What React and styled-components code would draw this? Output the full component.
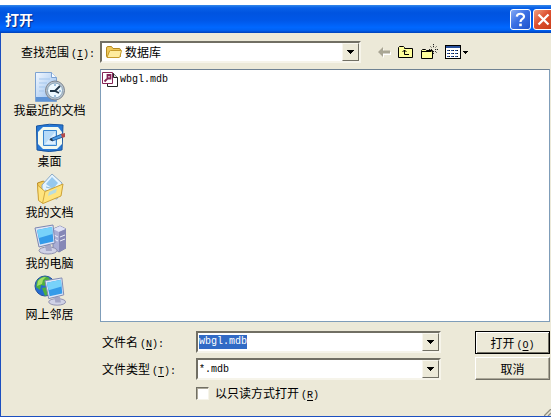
import { useEffect, useRef } from "react";
import styled, { createGlobalStyle } from "styled-components";

export default function App() {
    const nameInput = useRef(null);

    useEffect(() => {
        nameInput.current.focus();
        nameInput.current.select();
    }, []);

    return (
        <>
        <GlobalStyle/>
        <Dialog>
            <TitleBar>
                <Title>打开</Title>
                <TitleButtons>
                    <TitleButton type="button" aria-label="帮助">
                        <svg width="19" height="19" viewBox="0 0 19 19" fill="none" stroke="#fff">
                            <path d="M5.8 6.6C6 2.8 13.2 2.8 13 6.7C12.9 9 9.5 9 9.5 12" strokeWidth="2.2"/>
                            <path d="M9.5 13.6v2.6" strokeWidth="2.6"/>
                        </svg>
                    </TitleButton>
                    <TitleButton type="button" aria-label="关闭" $close>
                        <svg width="19" height="19" viewBox="0 0 19 19" stroke="#fff" strokeWidth="2.3">
                            <path d="M4.5 4.5l10 10M14.5 4.5l-10 10"/>
                        </svg>
                    </TitleButton>
                </TitleButtons>
            </TitleBar>
            <Body>
                <LookRow>
                    <LookLabel htmlFor="look">查找范围<Hotkey letter="I" colon/></LookLabel>
                    <Combo $icon>
                        <FolderIcon/>
                        <Select id="look">
                            <option>数据库</option>
                        </Select>
                        <Arrow/>
                    </Combo>
                    <Toolbar>
                        <ToolButton type="button" aria-label="后退" disabled><BackIcon/></ToolButton>
                        <ToolButton type="button" aria-label="向上一级"><UpIcon/></ToolButton>
                        <ToolButton type="button" aria-label="新建文件夹"><NewFolderIcon/></ToolButton>
                        <ToolButton type="button" aria-label="查看"><ViewsIcon/></ToolButton>
                    </Toolbar>
                </LookRow>
                <Main>
                    <Places>
                        <Place type="button"><RecentIcon/>我最近的文档</Place>
                        <Place type="button"><DesktopIcon/>桌面</Place>
                        <Place type="button"><DocumentsIcon/>我的文档</Place>
                        <Place type="button"><ComputerIcon/>我的电脑</Place>
                        <Place type="button"><NetworkIcon/>网上邻居</Place>
                    </Places>
                    <Content>
                        <FileList>
                            <File><AccessIcon/>wbgl.mdb</File>
                        </FileList>
                        <Form onSubmit={(e) => e.preventDefault()}>
                            <Fields>
                                <Field>
                                    <label htmlFor="name">文件名<Hotkey letter="N" colon/></label>
                                    <Combo>
                                        <NameInput id="name" ref={nameInput} defaultValue="wbgl.mdb"/>
                                        <Arrow/>
                                    </Combo>
                                </Field>
                                <Field>
                                    <label htmlFor="type">文件类型<Hotkey letter="T" colon/></label>
                                    <Combo>
                                        <Select id="type" $latin>
                                            <option>*.mdb</option>
                                        </Select>
                                        <Arrow/>
                                    </Combo>
                                </Field>
                                <ReadOnly>
                                    <Checkbox type="checkbox"/>
                                    <span>以只读方式打开<Hotkey letter="R"/></span>
                                </ReadOnly>
                            </Fields>
                            <Actions>
                                <PushButton type="submit" $primary>打开<Hotkey letter="O"/></PushButton>
                                <PushButton type="button">取消</PushButton>
                            </Actions>
                        </Form>
                    </Content>
                </Main>
                <Grip width="7" height="7" viewBox="0 0 7 7">
                    <path d="M0 7L7 0M4 7l3-3" stroke="#8f8d80" strokeWidth="1.3"/>
                </Grip>
            </Body>
        </Dialog>
        </>
    )
}

function Hotkey({ letter, colon }) {
    return <Latin>(<u>{letter}</u>){colon && ":"}</Latin>
}

function Arrow() {
    return (
        <ArrowBox>
            <svg width="7" height="4" viewBox="0 0 7 4" shapeRendering="crispEdges">
                <path d="M0 0h7v1h-1v1h-1v1h-1v1h-1v-1h-1v-1h-1v-1h-1z"/>
            </svg>
        </ArrowBox>
    )
}

function FolderIcon() {
    return (
        <svg width="16" height="16" viewBox="0 0 16 16">
            <path d="M.5 12.5V4Q.5 2.5 2 2.5h3.5l1.5 2h6q1.5 0 1.5 1.5v6.5z" fill="#f0c95a" stroke="#b68b22"/>
            <path d="M1 13.5L3.5 7q.3-.5 1-.5h11L14 12.5q-.3 1-1 1z" fill="#ffec9e" stroke="#c79c2c"/>
        </svg>
    )
}

function AccessIcon() {
    return (
        <svg width="16" height="16" viewBox="0 0 16 16">
            <path d="M5.5 1.5h6l4 4v9h-10z" fill="#fff" stroke="#222"/>
            <path d="M11.5 1.5v4h4" fill="#ddd" stroke="#222"/>
            <path d="M.5.5h10v11H.5z" fill="#fff" stroke="#862457"/>
            <path d="M2.5 9.5l3.5-3.5M5.5 3h3v3.5h-3z" fill="none" stroke="#862457" strokeWidth="1.8"/>
        </svg>
    )
}

function BackIcon() {
    return (
        <svg width="14" height="16" viewBox="0 0 14 16">
            <path d="M2 9l5-4v3h7v3H7v3z" fill="#fff"/>
            <path d="M1 8l5-5v3.5h7v3H6V13z" fill="#a9a694"/>
        </svg>
    )
}

function UpIcon() {
    return (
        <svg width="16" height="16" viewBox="0 0 16 16">
            <path d="M.5 13.5v-10l1-1h4l1 1v1h8v9z" fill="#ffff9c" stroke="#000"/>
            <path d="M6.5 6v4.5H11M4.5 8l2-2 2 2" fill="none" stroke="#000"/>
        </svg>
    )
}

function NewFolderIcon() {
    return (
        <svg width="17" height="16" viewBox="0 0 17 16">
            <path d="M.5 14.5v-8l1-1h3l1 1h6v8z" fill="#ffff9c" stroke="#000"/>
            <path d="M.5 7.5h10" stroke="#000"/>
            <path d="M12.5 0v4M12.5 7v3M8 5.5h3M14 5.5h3M9.5 2.5l1.5 1.5M15.5 2.5L14 4M14 7l2 2" stroke="#222" strokeDasharray="1.2 .8"/>
        </svg>
    )
}

function ViewsIcon() {
    return (
        <svg width="24" height="16" viewBox="0 0 24 16" shapeRendering="crispEdges">
            <path d="M.5 1.5h15v13H.5z" fill="#fff" stroke="#000"/>
            <path d="M1 2h14v2H1z" fill="#28509c"/>
            <path d="M2 6.5h2M6 6.5h2M10 6.5h2M2 9.5h2M6 9.5h2M10 9.5h2M2 12.5h2M6 12.5h2M10 12.5h2" stroke="#28509c"/>
            <path d="M4 6.5h1M8 6.5h1M12 6.5h1M4 9.5h1M8 9.5h1M12 9.5h1M4 12.5h1M8 12.5h1M12 12.5h1" stroke="#111"/>
            <path d="M18 7h5v1h-1v1h-1v1h-1v-1h-1v-1h-1z"/>
        </svg>
    )
}

function RecentIcon() {
    return (
        <svg width="32" height="32" viewBox="0 0 32 32">
            <defs>
                <linearGradient id="page" x1="0" y1="0" x2="1" y2="1">
                    <stop offset="0" stopColor="#f2f8ff"/>
                    <stop offset="1" stopColor="#8db9ed"/>
                </linearGradient>
            </defs>
            <path d="M1.5 1.5h16l5 5v24h-21z" fill="url(#page)" stroke="#7da3d2"/>
            <path d="M17.5 1.5v5h5" fill="#f8fcff" stroke="#7da3d2"/>
            <path d="M5 8h11M5 12h8M5 16h6M5 20h5" stroke="#a5c7ed"/>
            <path d="M2 26h20v4H2z" fill="#5c93d6"/>
            <circle cx="21" cy="19.5" r="9.5" fill="#b8c2cd" stroke="#7d858e"/>
            <circle cx="21" cy="19.5" r="7.5" fill="#eef9ff" stroke="#89a4b8"/>
            <path d="M21 20l5-5M21 20h-5M21 20l4 2" stroke="#233747" strokeWidth="1.8"/>
            <path d="M21 13v2M21 24v2M27 20h-2" stroke="#538ac0"/>
        </svg>
    )
}

function DesktopIcon() {
    return (
        <svg width="32" height="32" viewBox="0 0 32 32">
            <path d="M2.5 4Q15 1 29 3l-1 25q-13 3-25 0z" fill="#2778d5" stroke="#17549f"/>
            <path d="M9 5h15l4 5v12l-5 5H9l-5-5V10z" fill="#f2f9ef"/>
            <path d="M9.5 8.5h13v15h-13z" fill="#b6dbf8" stroke="#3685d0"/>
            <path d="M11 22l10-12v12z" fill="#ddf0ff"/>
            <path d="M16 17l12-5 1 3-11 4z" fill="#4b9de6" stroke="#2561a5"/>
            <path d="M15 18l3-2 1 3z" fill="#26394c"/>
            <path d="M27 12l4-1v4l-3 1z" fill="#b44b4a"/>
        </svg>
    )
}

function DocumentsIcon() {
    return (
        <svg width="32" height="32" viewBox="0 0 32 32">
            <path d="M3.5 10l6-2 3 3v16H5z" fill="#f4cc5a" stroke="#b98b26"/>
            <path d="M8 12L18 1l10 9-5 16-15-3z" fill="#e5f4ff" stroke="#8caac5"/>
            <path d="M12 11l6-7 6 6-5 6z" fill="#96c8ef"/>
            <path d="M12 14l8 2M11 17l7 2" stroke="#8eb8d5"/>
            <path d="M3.5 12L11 18.5 29 11l-2 12-18 7.5-4.5-3z" fill="#ffe47e" stroke="#cda237"/>
            <path d="M11 18.5L8.5 30.5" stroke="#d3aa42"/>
            <path d="M15 19l8-3.5-1 4-8 3.5z" fill="#b8dcdf"/>
        </svg>
    )
}

function Screen() {
    return (
        <>
        <ellipse cx="14" cy="26.5" rx="9" ry="3.5" fill="#d0d2e7" stroke="#8e8fae"/>
        <path d="M11 21h6l1 6h-6z" fill="#a5a7c6"/>
        <path d="M1 4l18-3 2 18-16 4z" fill="#dfe6f7" stroke="#7d86af"/>
        <path d="M3 6l15-3 1.5 14.5L6 20.5z" fill="#349be9"/>
        <path d="M3 6l15-3 .7 7L5 14z" fill="#77d2fa"/>
        </>
    )
}

function ComputerIcon() {
    return (
        <svg width="32" height="32" viewBox="0 0 32 32">
            <path d="M19 5l7-3 6 3v19l-7 4-6-4z" fill="#aaaed5" stroke="#7c80aa"/>
            <path d="M19 5l7-3 6 3-7 3z" fill="#dfe1f5"/>
            <path d="M25 8l7-3v19l-7 4z" fill="#8688b6"/>
            <path d="M20 11l4 2M20 15l4 2M26 13l5-2M26 17l5-2" stroke="#eceefb"/>
            <Screen/>
        </svg>
    )
}

function NetworkIcon() {
    return (
        <svg width="32" height="32" viewBox="0 0 32 32">
            <circle cx="11" cy="11" r="10" fill="#246bd0" stroke="#27539f"/>
            <path d="M3 6q5-6 11-4l3 3-5 2-1 4-4-1-1 5-4-3zM8 13l6-1 1 7-4 2z" fill="#4daf40"/>
            <path d="M4 6q3-4 8-4l-3 3-1 4-5 2z" fill="#a4df67"/>
            <g transform="translate(10 2) scale(.94)"><Screen/></g>
        </svg>
    )
}

const GlobalStyle = createGlobalStyle`
* {
box-sizing: border-box;
}

body {
margin: 0;
background: #ffffff;
color: #000000;
font: 12px/15px "Noto Sans CJK SC", sans-serif;
}

button, input, select {
font: inherit;
color: inherit;
margin: 0;
padding: 0;
}

svg {
display: block;
flex: none;
}
`
const Latin = styled.span`
margin-left: 2px;
font-family: "Liberation Mono", monospace;
font-size: 10px;
line-height: 10px;

u {
text-underline-offset: 2px;
}
`
const Dialog = styled.main`
display: flex;
flex-direction: column;
min-height: 100vh;
padding-top: 5px;
overflow: hidden;
`
const TitleBar = styled.header`
display: flex;
align-items: center;
justify-content: space-between;
height: 28px;
padding-left: 5px;
background: linear-gradient(#3488e8 0%, #0860e8 10%, #0054e0 28%, #0057e8 55%, #0067ff 80%, #0062f4 90%, #0040b8 100%);
`
const Title = styled.h1`
margin: 0;
color: #ffffff;
font-size: 14px;
line-height: 18px;
font-weight: bold;
text-shadow: 1px 1px 1px #0a2c87;
`
const TitleButtons = styled.div`
display: flex;
gap: 2px;
margin-right: -3px;
`
const TitleButton = styled.button`
display: flex;
width: 21px;
height: 21px;
border: 1px solid #ffffff;
border-radius: 3px;
background: ${({ $close }) => $close
    ? "linear-gradient(135deg, #f0a080, #dd5030 45%, #c83c18)"
    : "linear-gradient(135deg, #86aaf4, #3b70e4 45%, #1f53cc)"};
`
const Body = styled.div`
position: relative;
display: flex;
flex-direction: column;
flex: 1;
gap: 7px;
padding: 8px 1px 15px 0;
background: #ece9d8;
border-left: 1px solid #1c4fc0;
border-bottom: 1px solid #1c4fc0;
`
const LookRow = styled.div`
display: flex;
align-items: center;
height: 21px;
padding-right: 81px;
`
const LookLabel = styled.label`
width: 99px;
padding-left: 20px;
`
const Combo = styled.div`
display: flex;
align-items: center;
flex: 1;
gap: 3px;
min-width: 0;
height: 22px;
padding-left: ${({ $icon }) => $icon ? "4px" : "1px"};
background: #ffffff;
border: 2px solid;
border-color: #716f64 #f6f4ea #f6f4ea #716f64;
`
const Select = styled.select`
flex: 1;
min-width: 0;
height: 16px;
appearance: none;
border: 0;
outline: 0;
background: transparent;
font-family: ${({ $latin }) => $latin ? '"Liberation Mono", monospace' : '"Noto Sans CJK SC", sans-serif'};
font-size: ${({ $latin }) => $latin ? "10px" : "12px"};
`
const NameInput = styled.input`
flex: 1;
min-width: 0;
height: 14px;
border: 0;
outline: 0;
background: transparent;
font: 10px/14px "Liberation Mono", monospace;

&::selection {
background: #316ac5;
color: #ffffff;
}
`
const ArrowBox = styled.span`
display: flex;
align-items: center;
justify-content: center;
width: 17px;
height: 18px;
background: #ece9d8;
border: 1px solid;
border-color: #f8f6ee #716f64 #716f64 #f8f6ee;
pointer-events: none;
`
const Toolbar = styled.div`
display: flex;
gap: 7px;
margin-left: 16px;
`
const ToolButton = styled.button`
border: 0;
background: transparent;
`
const Main = styled.div`
display: flex;
flex: 1;
`
const Places = styled.nav`
display: flex;
flex-direction: column;
flex: none;
gap: 6px;
width: 99px;
padding: 2px 2px 0 0;
`
const Place = styled.button`
display: flex;
flex-direction: column;
align-items: center;
border: 0;
background: transparent;
line-height: 13px;
`
const Content = styled.div`
display: flex;
flex-direction: column;
flex: 1;
gap: 9px;
min-width: 0;
`
const FileList = styled.ul`
flex: 1;
margin: 0;
padding: 2px 1px;
list-style: none;
background: #ffffff;
border: 1px solid #7f9db9;
border-top-color: #6f8293;
`
const File = styled.li`
display: flex;
align-items: center;
gap: 2px;
font: 10px/16px "Liberation Mono", monospace;
`
const Form = styled.form`
display: flex;
gap: 34px;
`
const Fields = styled.div`
display: flex;
flex-direction: column;
flex: 1;
gap: 5px;
`
const Field = styled.div`
display: flex;
align-items: center;

label {
width: 96px;
padding-left: 2px;
}
`
const ReadOnly = styled.label`
display: flex;
align-items: center;
align-self: flex-start;
gap: 6px;
margin-left: 96px;
`
const Checkbox = styled.input`
width: 13px;
height: 13px;
appearance: none;
background: #ffffff;
border: 1px solid;
border-color: #716f64 #f6f4ea #f6f4ea #716f64;
box-shadow: inset 1px 1px #aca899;

&:checked {
background: #316ac5;
}
`
const Actions = styled.div`
display: flex;
flex-direction: column;
gap: 3px;
width: 75px;
`
const PushButton = styled.button`
height: 23px;
background: #ece9d8;
border: 1px solid;
border-color: ${({ $primary }) => $primary ? "#000000" : "#ffffff #716f64 #716f64 #ffffff"};
box-shadow: ${({ $primary }) => $primary
    ? "inset 1px 1px #ffffff, inset -1px -1px #716f64"
    : "inset -1px -1px #aca899"};
`
const Grip = styled.svg`
position: absolute;
right: 0;
bottom: 0;
`
